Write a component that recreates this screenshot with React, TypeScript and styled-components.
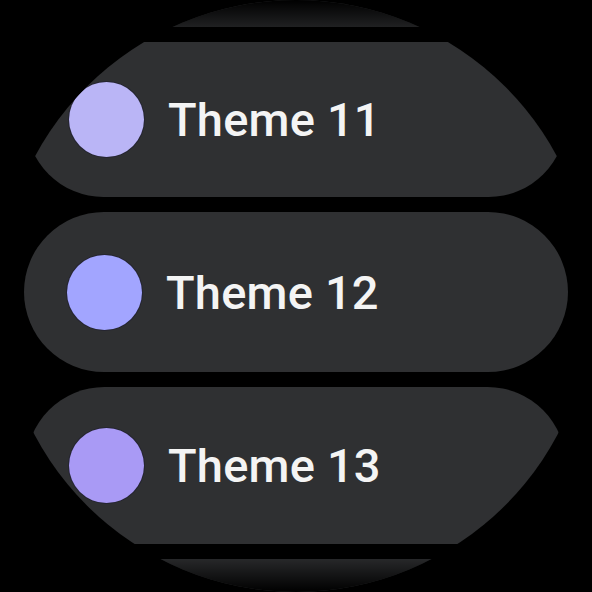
import React from 'react';
import styled, {createGlobalStyle} from 'styled-components';

const GlobalStyle = createGlobalStyle`
    html, body {
        margin: 0;
        padding: 0;
        background: #000;
    }
`;

const Screen = styled.div`
    position: relative;
    width: 592px;
    height: 592px;
    border-radius: 50%;
    overflow: hidden;
    background: #000;
    font-family: Roboto, 'Noto Sans', sans-serif;
`;

const List = styled.div`
    display: flex;
    flex-direction: column;
    align-items: center;
    gap: 15px;
    margin-top: -128px;
`;

// fades the chips that scroll under the top and bottom of the round face
const EdgeFade = styled.div`
    position: absolute;
    inset: 0;
    pointer-events: none;
    background: linear-gradient(
        to bottom,
        #000 0px,
        rgba(0, 0, 0, 0.55) 18px,
        rgba(0, 0, 0, 0) 40px,
        rgba(0, 0, 0, 0) 552px,
        rgba(0, 0, 0, 0.55) 574px,
        #000 592px
    );
`;

const Chip = styled.div<{$h: number; $w: number}>`
    display: flex;
    align-items: center;
    gap: 24px;
    box-sizing: border-box;
    width: ${p => p.$w}px;
    height: ${p => p.$h}px;
    flex-shrink: 0;
    padding-left: 43px;
    border-radius: ${p => p.$h / 2}px;
    background: #2f3032;
`;

const Swatch = styled.span<{$color: string}>`
    width: 75px;
    height: 75px;
    flex-shrink: 0;
    border-radius: 50%;
    background: ${p => p.$color};
    box-shadow: 0 0 0 1px rgba(24, 22, 48, 0.45);
`;

const Label = styled.span`
    color: #f4f4f4;
    font-size: 47px;
    font-weight: 500;
    letter-spacing: 0.2px;
    white-space: nowrap;
`;

type Theme = {name: string; color: string; h: number; w: number};

const themes: Theme[] = [
    {name: 'Theme 11', color: '#bab5f6', h: 155, w: 540},
    {name: 'Theme 12', color: '#a2a5ff', h: 160, w: 544},
    {name: 'Theme 13', color: '#a99af5', h: 157, w: 540},
];

// chips scrolled mostly off the face; only their rim shows
function OffscreenChip() {
    return <Chip $h={155} $w={536} />;
}

export default function App() {
    return (
        <>
            <GlobalStyle />
            <Screen>
                <List>
                    <OffscreenChip />
                    {themes.map(t => (
                        <Chip key={t.name} $h={t.h} $w={t.w}>
                            <Swatch $color={t.color} />
                            <Label>{t.name}</Label>
                        </Chip>
                    ))}
                    <OffscreenChip />
                </List>
                <EdgeFade />
            </Screen>
        </>
    );
}
